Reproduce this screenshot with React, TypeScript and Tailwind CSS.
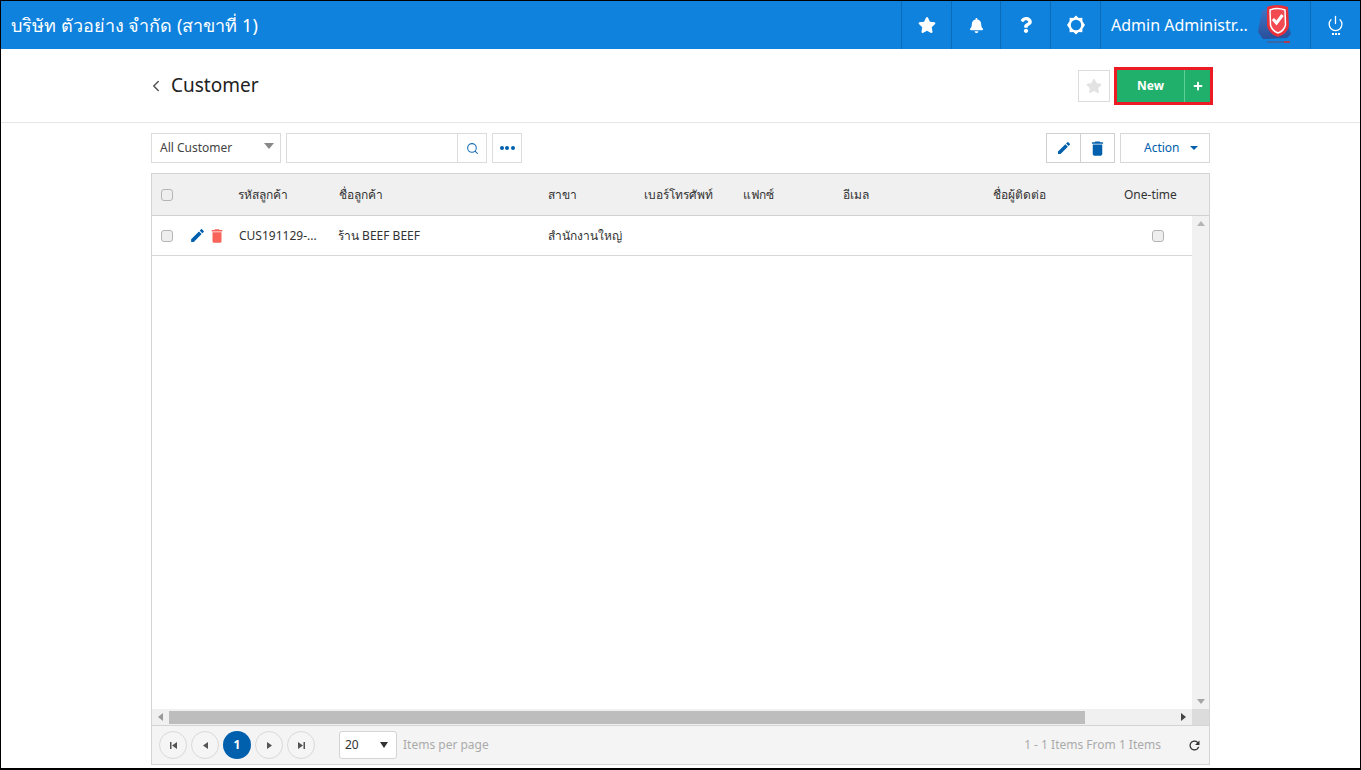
import React from "react";
import { FaStar, FaBell, FaQuestion, FaPlus } from "react-icons/fa";
import { MdEdit, MdDelete, MdRefresh } from "react-icons/md";
import { ChevronLeft, Power, Search } from "lucide-react";

const font = { fontFamily: '"Noto Sans", "Open Sans", "Liberation Sans", sans-serif' };

function NavCell({ children, className = "w-[50px]" }: { children: React.ReactNode; className?: string }) {
  return <div className={`flex h-full items-center justify-center border-l border-[#0a6cb8] text-white ${className}`}>{children}</div>;
}

function Gear() {
  return (
    <svg width="20" height="20" viewBox="0 0 20 20">
      <path d="M10 0.5l2.7 2.4 3.6-.2.2 3.6L19 10l-2.5 3.7-.2 3.6-3.6-.2L10 19.5l-2.7-2.4-3.6.2-.2-3.6L1 10l2.5-3.7.2-3.6 3.6.2z" fill="#fff" />
      <circle cx="10" cy="10" r="5.2" fill="#0e82dd" />
    </svg>
  );
}

function Logo() {
  return (
    <svg width="36" height="42" viewBox="0 0 36 42">
      <defs>
        <linearGradient id="lg" x1="0" x2="0" y1="0" y2="1">
          <stop offset="0" stopColor="#3f78c9" />
          <stop offset="1" stopColor="#2a4f9a" />
        </linearGradient>
      </defs>
      <path d="M5 6 L26 2 L34 30 L30 34 L6 35 L1 28 Z" fill="url(#lg)" />
      <path d="M10 3 Q20 -1 31 3 L32 22 Q30 30 21 33 Q12 30 10 22 Z" fill="#e8303a" />
      <path d="M13 6 Q20 3 28 6 L28.500 21 Q27 27 21 29 Q15 27 13.500 21 Z" fill="#f14a50" stroke="#fff" strokeWidth="1.500" />
      <path d="M16 15 l3.500 4 l6-8" fill="none" stroke="#fff" strokeWidth="3" />
      <rect x="10" y="37" width="22" height="2" fill="#4a5a90" opacity="0.7" />
      <rect x="27" y="37" width="6" height="2" fill="#c8303a" opacity="0.8" />
    </svg>
  );
}

function Check({ className = "" }: { className?: string }) {
  return <span className={`block h-[12px] w-[12px] rounded-[3px] border border-[#b5b5b5] bg-[#eeeeee] ${className}`} />;
}

function Pager({ children, active = false }: { children: React.ReactNode; active?: boolean }) {
  return (
    <span className={`flex h-[28px] w-[28px] items-center justify-center rounded-full text-[12px] font-bold ${active ? "bg-[#0060ad] text-white" : "border border-[#d9d9d9] bg-[#f5f5f5] text-[#555]"}`}>
      {children}
    </span>
  );
}

const Tri = ({ d }: { d: string }) => (
  <svg width="9" height="9" viewBox="0 0 9 9"><path d={d} fill="#555" /></svg>
);

export default function App() {
  return (
    <div className="flex h-[770px] w-[1361px] flex-col overflow-hidden border-t border-r border-l border-b-2 border-black bg-white" style={font}>
      <header className="flex h-[48px] shrink-0 items-center bg-[#0e82dd] text-white">
        <div className="flex-1 pl-[10px] text-[18px]">บริษัท ตัวอย่าง จำกัด (สาขาที่ 1)</div>
        <NavCell className="w-[50px]"><FaStar size={18} /></NavCell>
        <NavCell className="w-[49px]"><FaBell size={15} /></NavCell>
        <NavCell><FaQuestion size={16} /></NavCell>
        <NavCell><Gear /></NavCell>
        <NavCell className="w-[210px] !justify-start pl-[10px]">
          <span className="w-[146px] text-[16px] whitespace-nowrap">Admin Administr...</span>
          <Logo />
        </NavCell>
        <NavCell className="w-[50px] flex-col">
          <Power size={17} strokeWidth={1.8} />
          <span className="mt-[1px] flex gap-[1px]">
            <i className="h-[2px] w-[2px] bg-white" /><i className="h-[2px] w-[2px] bg-white" /><i className="h-[2px] w-[2px] bg-white" />
          </span>
        </NavCell>
      </header>

      <div className="flex h-[74px] shrink-0 items-center border-b border-[#e5e5e5] pr-[147px] pl-[146px]">
        <ChevronLeft size={18} className="text-[#555]" />
        <span className="ml-[6px] flex-1 text-[19px] text-[#222]">Customer</span>
        <span className="mr-[4px] flex h-[32px] w-[32px] items-center justify-center border border-[#dcdcdc]">
          <FaStar size={16} className="text-[#e3e3e3]" />
        </span>
        <div className="flex h-[38px] w-[99px] border-[3px] border-[#ed1c24] bg-[#20b06c] text-white">
          <span className="flex flex-1 items-center justify-center border-r border-[#5fcf95] text-[12px] font-bold">New</span>
          <span className="flex w-[25px] items-center justify-center"><FaPlus size={10} className="font-light" /></span>
        </div>
      </div>

      <div className="flex flex-1 flex-col px-[150px] pt-[10px] pb-[3px]">
        <div className="flex h-[30px] shrink-0 items-stretch text-[12px]">
          <div className="flex w-[130px] items-center justify-between border border-[#dcdcdc] pr-[6px] pl-[8px] text-[#444]">
            <span>All Customer</span>
            <svg width="10" height="6" viewBox="0 0 10 6" className="mb-[4px]"><path d="M0 0h10L5 6z" fill="#888" /></svg>
          </div>
          <div className="ml-[5px] flex w-[201px] border border-[#dcdcdc]">
            <span className="flex-1" />
            <span className="flex w-[29px] items-center justify-center border-l border-[#dcdcdc]"><Search size={13} className="text-[#1c6fb5]" /></span>
          </div>
          <div className="ml-[5px] flex w-[30px] items-center justify-center gap-[1.500px] border border-[#dcdcdc]">
            <i className="h-[4px] w-[4px] rounded-full bg-[#0060ad]" /><i className="h-[4px] w-[4px] rounded-full bg-[#0060ad]" /><i className="h-[4px] w-[4px] rounded-full bg-[#0060ad]" />
          </div>
          <div className="flex-1" />
          <div className="flex w-[69px] border border-[#d0d0d0] text-[#0060ad]">
            <span className="flex flex-1 items-center justify-center border-r border-[#d0d0d0]"><MdEdit size={16} /></span>
            <span className="flex flex-1 items-center justify-center"><MdDelete size={19} /></span>
          </div>
          <div className="ml-[5px] flex w-[90px] items-center border border-[#d8d8d8] pl-[23px] text-[#0060ad]">
            <span>Action</span>
            <svg width="8" height="4" viewBox="0 0 8 4" className="ml-[10px]"><path d="M0 0h8L4 4z" fill="#0060ad" /></svg>
          </div>
        </div>

        <div className="mt-[10px] flex flex-1 flex-col border border-[#d4d4d4] text-[12px]">
          <div className="grid h-[42px] shrink-0 grid-cols-[86px_101px_209px_96px_99px_100px_150px_131px_1fr] items-center border-b border-[#d0d0d0] bg-[#f0f0f0] text-[#333]">
            <span className="pl-[9px]"><Check /></span>
            <span>รหัสลูกค้า</span>
            <span>ชื่อลูกค้า</span>
            <span>สาขา</span>
            <span>เบอร์โทรศัพท์</span>
            <span>แฟกซ์</span>
            <span>อีเมล</span>
            <span>ชื่อผู้ติดต่อ</span>
            <span>One-time</span>
          </div>
          <div className="flex min-h-0 flex-1">
            <div className="flex-1">
              <div className="grid h-[40px] grid-cols-[37px_49px_100px_210px_96px_1fr_40px] items-center border-b border-[#d8d8d8] text-[#333]">
                <span className="pl-[9px]"><Check /></span>
                <span className="flex items-center gap-[2px]">
                  <MdEdit size={17} className="text-[#0060ad]" />
                  <MdDelete size={18} className="text-[#f8635a]" />
                </span>
                <span className="pl-[1px]">CUS191129-...</span>
                <span>ร้าน BEEF BEEF</span>
                <span>สำนักงานใหญ่</span>
                <span />
                <Check className="mb-[0px]" />
              </div>
            </div>
            <div className="flex w-[17px] flex-col items-center justify-between bg-[#f1f1f1] py-[5px]">
              <svg width="8" height="5" viewBox="0 0 8 5"><path d="M0 5h8L4 0z" fill="#b5b5b5" /></svg>
              <svg width="8" height="5" viewBox="0 0 8 5"><path d="M0 0h8L4 5z" fill="#a5a5a5" /></svg>
            </div>
          </div>
          <div className="flex h-[16px] shrink-0 items-center bg-[#f0f0f0]">
            <span className="flex w-[17px] justify-center"><svg width="5" height="8" viewBox="0 0 5 8"><path d="M5 0v8L0 4z" fill="#999" /></svg></span>
            <span className="h-[13px] w-[916px] bg-[#bdbdbd]" />
            <span className="flex-1" />
            <span className="flex w-[17px] justify-center"><svg width="5" height="8" viewBox="0 0 5 8"><path d="M0 0v8l5-4z" fill="#444" /></svg></span>
            <span className="h-full w-[17px] bg-[#dcdcdc]" />
          </div>
          <div className="flex h-[39px] shrink-0 items-center border-t border-[#d4d4d4] bg-[#f4f4f4] pr-[7px] pl-[7px]">
            <div className="flex gap-[4px]">
              <Pager><Tri d="M1 1h1.500v7H1zM8 1v7L3 4.500z" /></Pager>
              <Pager><Tri d="M7 1v7L2 4.500z" /></Pager>
              <Pager active>1</Pager>
              <Pager><Tri d="M2 1v7l5-3.500z" /></Pager>
              <Pager><Tri d="M1 1v7l5-3.500zM6.500 1H8v7H6.500z" /></Pager>
            </div>
            <div className="ml-[24px] flex h-[28px] w-[58px] items-center justify-between rounded-[3px] border border-[#d4d4d4] bg-white pr-[8px] pl-[5px] text-[12px] text-[#333]">
              <span>20</span>
              <svg width="8" height="6" viewBox="0 0 8 6"><path d="M0 0h8L4 6z" fill="#333" /></svg>
            </div>
            <span className="ml-[6px] text-[12px] text-[#aaaaaa]">Items per page</span>
            <span className="flex-1" />
            <span className="text-[12px] text-[#aaaaaa]">1 - 1 Items From 1 Items</span>
            <MdRefresh size={15} className="ml-[26px] text-[#333]" />
          </div>
        </div>
      </div>
    </div>
  );
}
